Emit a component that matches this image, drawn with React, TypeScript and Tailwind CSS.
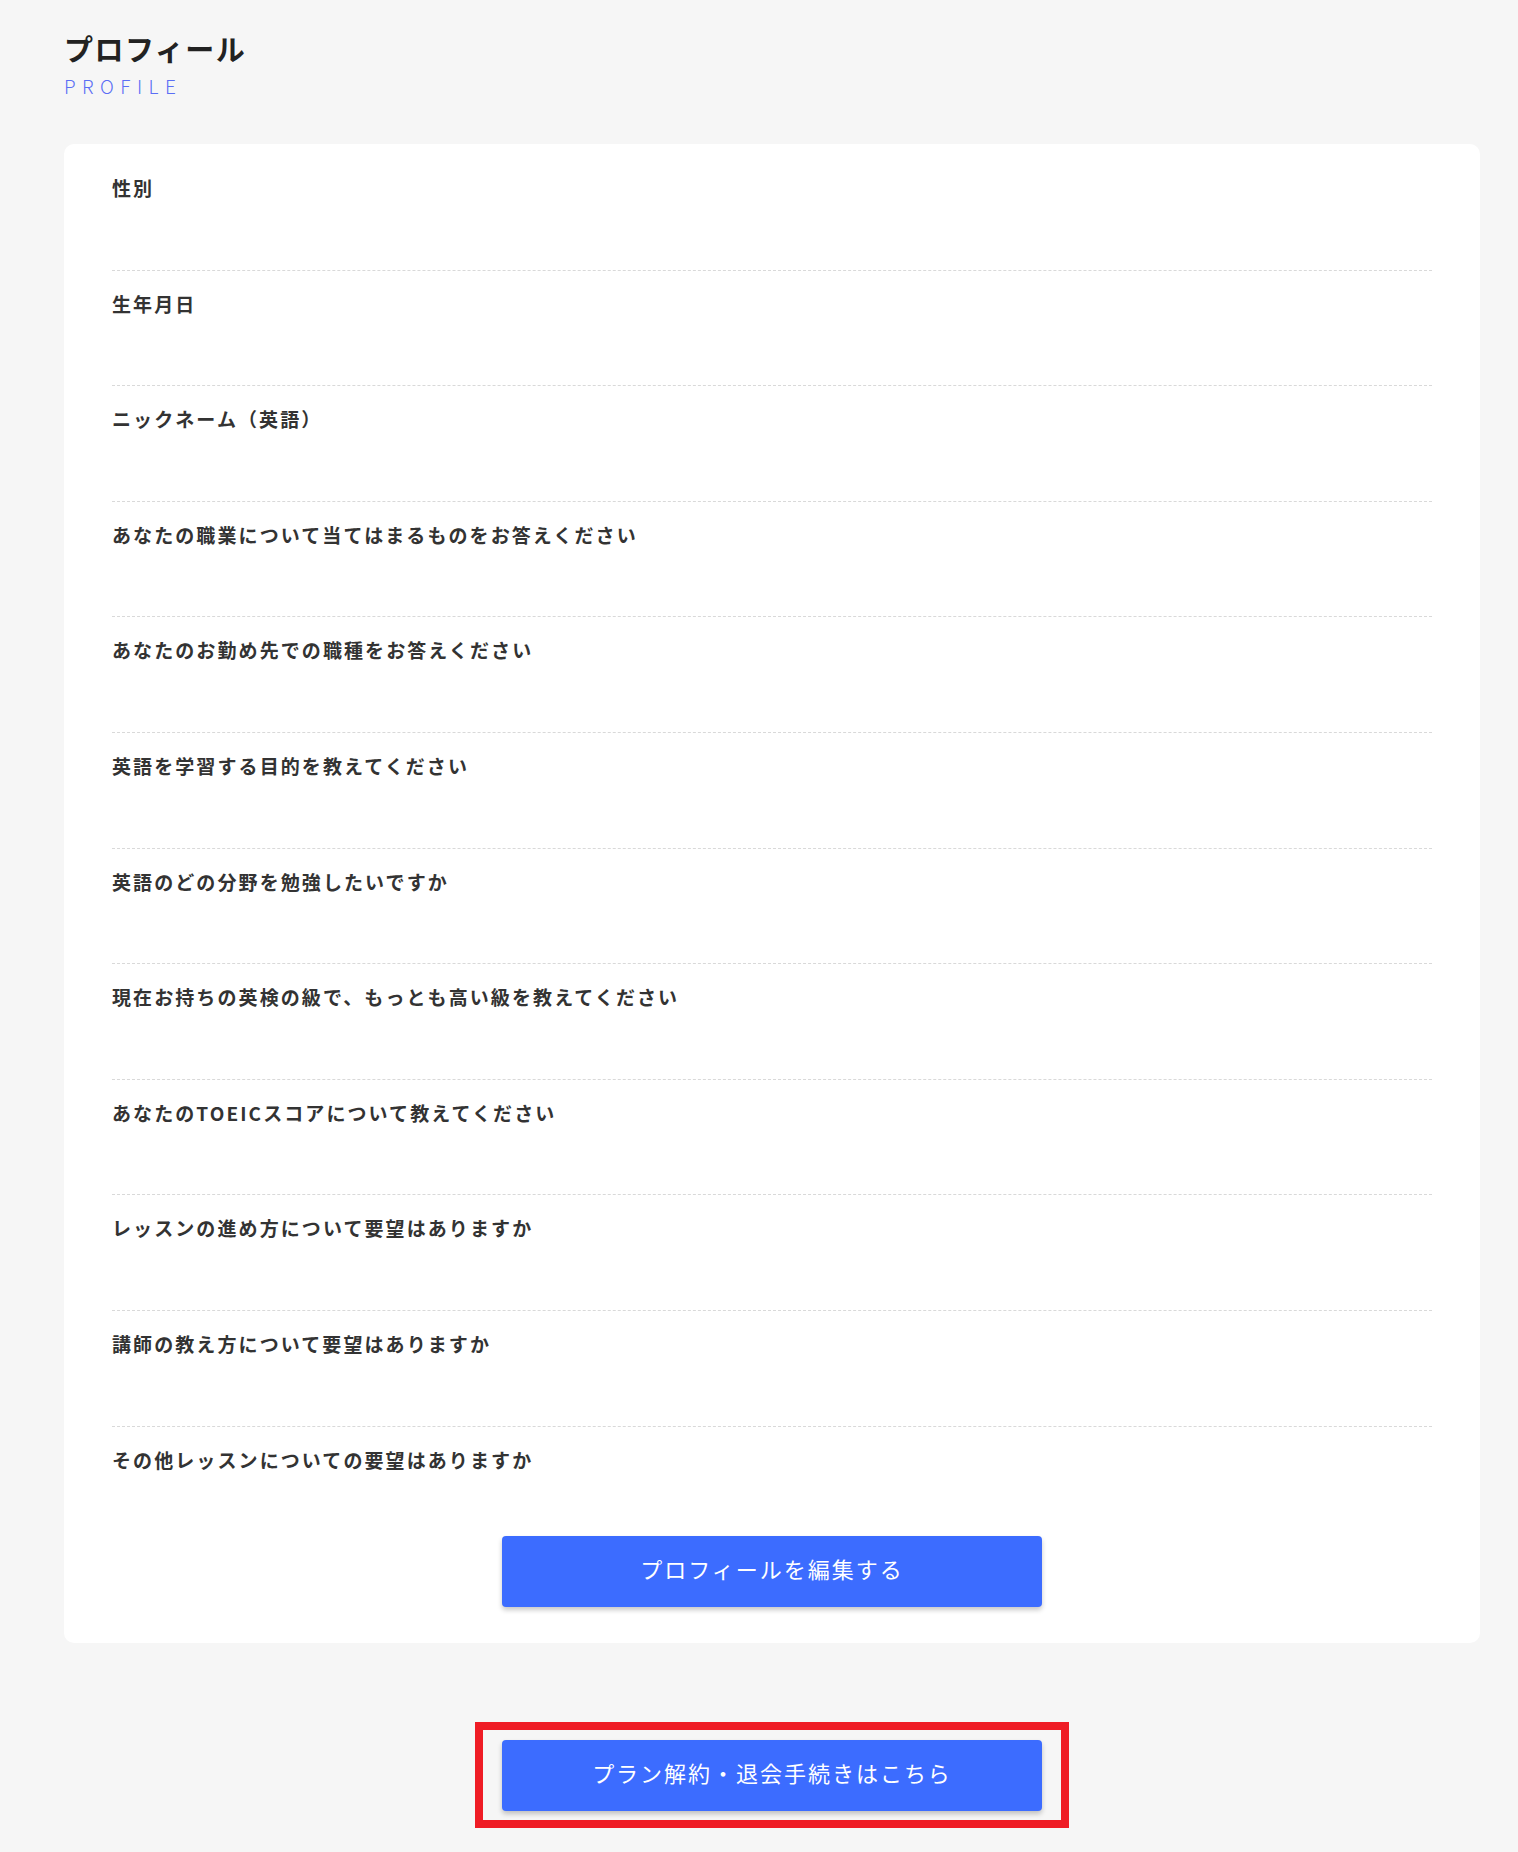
import React from 'react';

const fields = [
  '性別',
  '生年月日',
  'ニックネーム（英語）',
  'あなたの職業について当てはまるものをお答えください',
  'あなたのお勤め先での職種をお答えください',
  '英語を学習する目的を教えてください',
  '英語のどの分野を勉強したいですか',
  '現在お持ちの英検の級で、もっとも高い級を教えてください',
  'あなたのTOEICスコアについて教えてください',
  'レッスンの進め方について要望はありますか',
  '講師の教え方について要望はありますか',
  'その他レッスンについての要望はありますか',
];

const font = { fontFamily: '"Noto Sans CJK JP", "Noto Sans", sans-serif' };

const ActionButton: React.FC<{ label: string }> = ({ label }) => (
  <button className="w-[540px] h-[71px] pb-[6px] rounded-[4px] bg-[#3c6cff] text-white text-[22px] font-normal tracking-[0.09em] shadow-[0_3px_5px_rgba(0,0,0,0.22)]">
    {label}
  </button>
);

export default function App() {
  return (
    <div className="min-h-[1852px] bg-[#f6f6f6] pl-[64px] pr-[38px] pt-[28px] text-[#2b2b2b]" style={font}>
      {/* Heading */}
      <h1 className="text-[29px] font-bold leading-[40px] tracking-[0.05em] text-[#222]">プロフィール</h1>
      <p className="mt-[6px] text-[19px] font-light leading-[24px] tracking-[0.34em] text-[#5b6ef5]">PROFILE</p>

      {/* Profile card */}
      <div className="mt-[46px] bg-white rounded-[10px] px-12 pt-[11px] pb-[36px]">
        {fields.map((f, i) => {
          const last = i === fields.length - 1;
          return (
            <div
              key={f}
              className={last ? 'pt-[19px]' : 'h-[115.6px] pt-[19px] border-b border-dashed border-[#d9d9d9]'}
            >
              <div className="text-[19px] font-bold leading-[27px] tracking-[0.11em] text-[#333]">{f}</div>
            </div>
          );
        })}
        <div className="mt-[63px] flex justify-center">
          <ActionButton label="プロフィールを編集する" />
        </div>
      </div>

      {/* Cancel / withdraw */}
      <div className="mt-[79px] pb-[24px] flex justify-center">
        <div className="border-[8px] border-[#ef1c25] px-[19px] pt-[10px] pb-[9px]">
          <ActionButton label="プラン解約・退会手続きはこちら" />
        </div>
      </div>
    </div>
  );
}
